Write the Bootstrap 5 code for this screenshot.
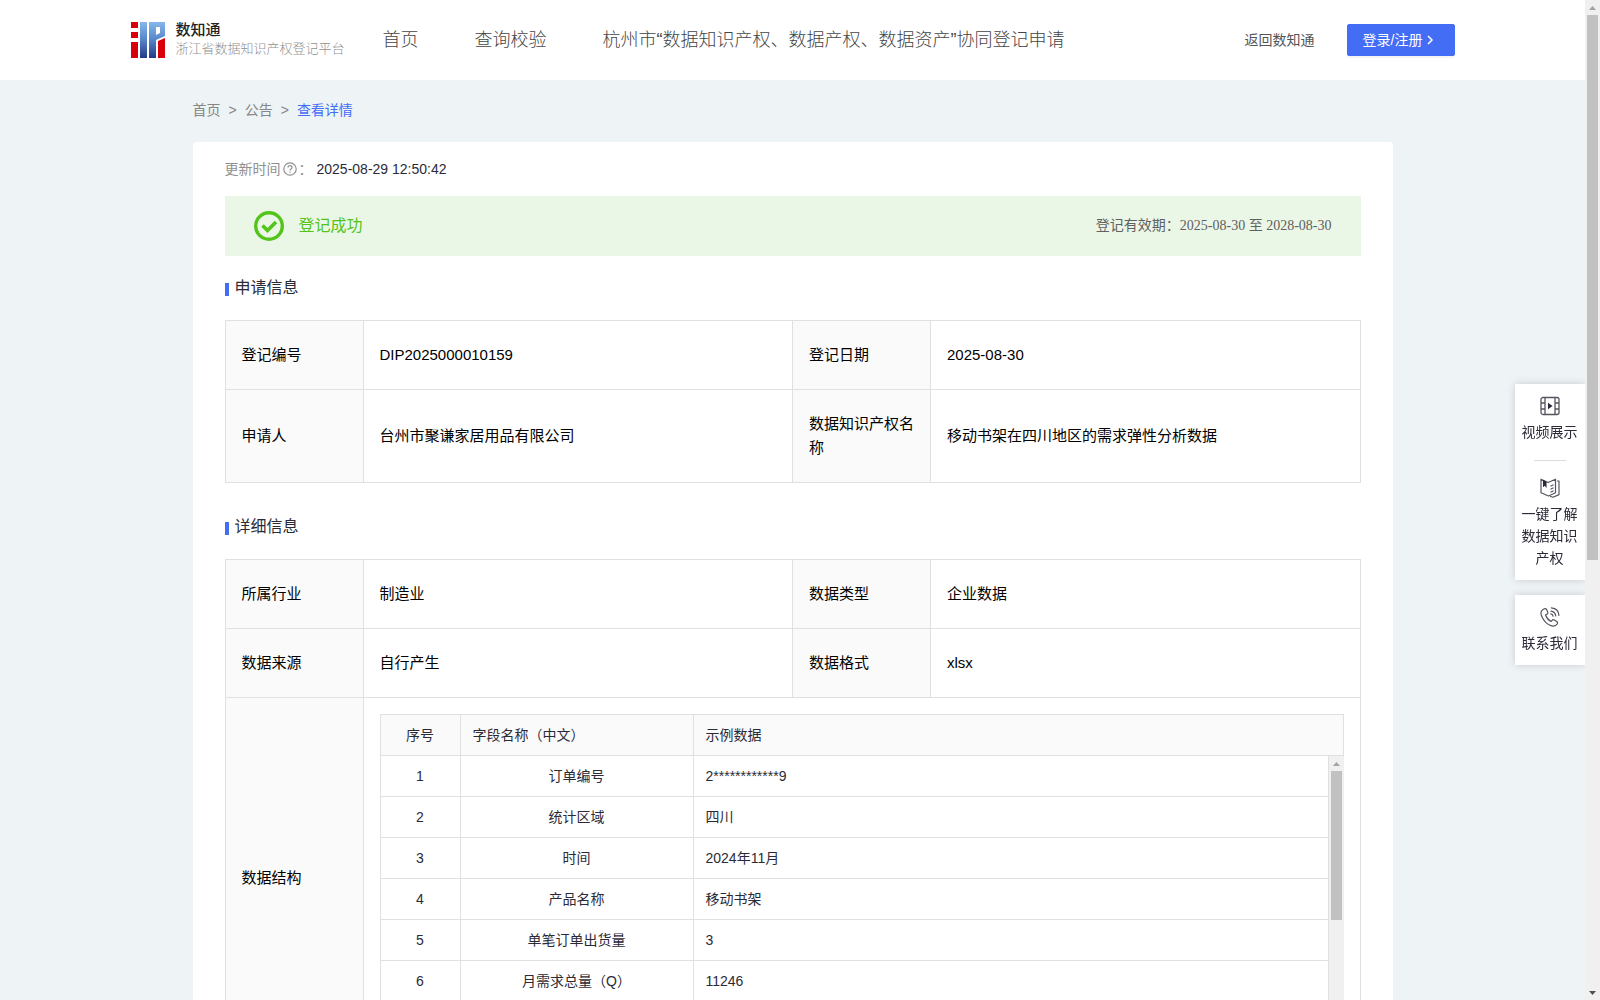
<!DOCTYPE html>
<html lang="zh-CN">
<head>
<meta charset="utf-8">
<meta name="viewport" content="width=device-width, initial-scale=1">
<title>数知通 - 查看详情</title>
<link href="https://cdn.jsdelivr.net/npm/bootstrap@5.3.0/dist/css/bootstrap.min.css" rel="stylesheet">
<style>
  :root { --brand: #446df6; --line: #e0e0e0; --ink: #2b2b38; --soft: #fafafa; }
  html { scrollbar-width: none; }
  html::-webkit-scrollbar { display: none; }
  body {
    font-family: "Liberation Sans", "Noto Sans CJK SC", sans-serif;
    font-size: 14px; line-height: 22px; color: var(--ink);
    background: #eef3f6; padding-right: 15px;
  }
  a { text-decoration: none; }
  .site-header { background: #fff; min-height: 80px; }
  .header-inner { max-width: 1324px; }
  .brand-name { font-size: 15px; line-height: 18px; font-weight: 500; color: #222; }
  .brand-sub { font-size: 13px; line-height: 20px; color: #909090; font-weight: 300; }
  .brand-link { width: 252px; gap: 11px; }
  .main-nav { gap: 56px; font-size: 18px; }
  .main-nav a { color: #444; font-weight: 300; }
  .back-link { color: #555; }
  .login-btn {
    --bs-btn-color: #fff; --bs-btn-bg: var(--brand); --bs-btn-border-color: var(--brand);
    --bs-btn-hover-color: #fff; --bs-btn-hover-bg: #6a8bff;
    width: 108px; height: 32px; font-size: 14px; border-radius: 2px; padding: 0 15px;
    box-shadow: 0 2px 0 rgba(0,0,0,.045);
  }
  .page-main { max-width: 1200px; }
  .crumbs { gap: 8px; padding: 19px 0 21px; color: #868686; }
  .crumbs a { color: #868686; }
  .crumbs .current { color: var(--brand); }
  .detail-panel { background: #fff; border-radius: 4px; padding: 16px 32px 32px; }
  .update-label { color: #909090; gap: 2px; }
  .status-bar { background: #ebf7e6; height: 60px; margin-top: 16px; padding: 0 29px; }
  .status-text { color: #52c41a; font-size: 16px; gap: 15px; }
  .valid-text { font-family: "Liberation Serif", "Noto Sans CJK SC", serif; color: #606060; }
  .section-title { font-size: 16px; line-height: 24px; font-weight: 400; margin: 20px 0; gap: 6px; color: var(--ink); }
  .section-title::before { content: ""; width: 4px; height: 13px; margin-top: 2px; background: var(--brand); }
  .section-title.later { margin-top: 32px; }
  .info-grid { table-layout: fixed; width: 100%; border-collapse: collapse; font-size: 15px; line-height: 24px; color: #000; }
  .info-grid .label-col { width: 138px; }
  .info-grid > tbody > tr > * { border: 1px solid var(--line); padding: 22px 16px; font-weight: 400; vertical-align: middle; }
  .info-grid > tbody > tr > th { background: var(--soft); }
  .info-grid > tbody > tr > td.nested { padding: 16px; }
  .field-grid { table-layout: fixed; width: 100%; border-collapse: separate; border-spacing: 0; font-size: 14px; line-height: 22px; color: var(--ink); }
  .field-grid .no-col { width: 81px; }
  .field-grid .name-col { width: 233px; }
  .field-grid th, .field-grid td { height: 41px; padding: 9px 12px; font-weight: 400; border-right: 1px solid var(--line); border-bottom: 1px solid var(--line); }
  .field-grid th { background: var(--soft); border-top: 1px solid var(--line); height: 42px; }
  .field-grid tr > :first-child { border-left: 1px solid var(--line); }
  .field-scroll { height: 286px; overflow: hidden; }
  .bar-track { width: 15px; background: #f0f0f0; padding: 0 2px; }
  .bar-track .arrow { height: 15px; display: flex; align-items: center; justify-content: center; }
  .bar-track .thumb { background: #c1c1c1; width: 11px; height: 149px; }
  .page-bar { position: fixed; top: 0; right: 0; bottom: 0; z-index: 30; }
  .page-bar .thumb { height: 56.2%; }
  .side-tools { position: fixed; right: 15px; top: 384px; width: 70px; z-index: 20; gap: 15px; }
  .side-box { background: #fff; padding: 12px 7px 11px 6px; box-shadow: 0 0 8px rgba(0,0,0,.16); clip-path: inset(-12px 0 -12px -12px); }
  .side-box a { color: var(--ink); gap: 5px; }
  .side-rule { width: 32px; height: 1px; background: #dcdcdc; margin: 17px auto; }
</style>
<script src="https://cdn.jsdelivr.net/npm/bootstrap@5.3.0/dist/js/bootstrap.bundle.min.js" defer></script>
</head>
<body>

<header class="site-header d-flex align-items-center">
  <div class="header-inner d-flex align-items-center w-100 mx-auto">
    <a href="#" class="brand-link d-flex align-items-center flex-shrink-0">
      <svg width="34" height="36" viewBox="0 0 34 36" aria-hidden="true" class="flex-shrink-0">
        <defs><linearGradient id="blue" x1="0" y1="0" x2="0" y2="36" gradientUnits="userSpaceOnUse"><stop offset="0" stop-color="#86b8ec"/><stop offset=".5" stop-color="#5584c8"/><stop offset="1" stop-color="#253a86"/></linearGradient></defs>
        <path fill="#d7000b" d="M0 0h7v6H0zM0 10h7v6H0zM0 20h7v16H0zM27 19l7-3v20h-7z"/>
        <path fill="url(#blue)" d="M9 0h7v36H9zM18 0h16v14l-9 4v18h-7zM25 5v8l4-2V5z" fill-rule="evenodd"/>
      </svg>
      <span class="d-flex flex-column">
        <span class="brand-name">数知通</span>
        <span class="brand-sub text-nowrap">浙江省数据知识产权登记平台</span>
      </span>
    </a>
    <nav class="main-nav d-flex text-nowrap flex-grow-1">
      <a href="#">首页</a>
      <a href="#">查询校验</a>
      <a href="#">杭州市“数据知识产权、数据产权、数据资产”协同登记申请</a>
    </nav>
    <a href="#" class="back-link text-nowrap me-3">返回数知通</a>
    <button type="button" class="login-btn btn d-inline-flex align-items-center text-nowrap ms-3 flex-shrink-0">登录/注册
      <svg width="8" height="10" viewBox="0 0 8 10" class="ms-1" fill="none" stroke="#fff" stroke-width="1.5" aria-hidden="true"><path d="M2 1l4 4-4 4"/></svg>
    </button>
  </div>
</header>

<main class="page-main mx-auto">
  <nav class="crumbs d-flex" aria-label="breadcrumb">
    <a href="#">首页</a><span>&gt;</span><a href="#">公告</a><span>&gt;</span><span class="current">查看详情</span>
  </nav>

  <section class="detail-panel">
    <div class="d-flex align-items-center gap-1">
      <span class="update-label d-flex align-items-center">更新时间
        <svg width="14" height="14" viewBox="0 0 14 14" fill="none" stroke="#909090" stroke-width="1.2" aria-hidden="true"><circle cx="7" cy="7" r="6.2"/><path d="M5 5.5C5 3 9 3 9 5.4 9 7 7 6.800 7 8.400M7 9.600v1.200"/></svg><span>：</span></span>
      <span>2025-08-29 12:50:42</span>
    </div>

    <div class="status-bar d-flex align-items-center justify-content-between">
      <span class="status-text d-flex align-items-center">
        <svg width="30" height="30" viewBox="0 0 30 30" fill="none" stroke="#52c41a" aria-hidden="true"><circle cx="15" cy="15" r="13.300" stroke-width="3.400"/><path d="M8.500 14.500l5 5 8.500-8.500" stroke-width="3.600"/></svg>登记成功</span>
      <span class="valid-text">登记有效期：2025-08-30 至 2028-08-30</span>
    </div>

    <h2 class="section-title d-flex align-items-center">申请信息</h2>
    <table class="info-grid">
      <colgroup><col class="label-col"><col><col class="label-col"><col></colgroup>
      <tbody>
        <tr><th scope="row">登记编号</th><td>DIP2025000010159</td><th scope="row">登记日期</th><td>2025-08-30</td></tr>
        <tr><th scope="row">申请人</th><td>台州市聚谦家居用品有限公司</td><th scope="row">数据知识产权名称</th><td>移动书架在四川地区的需求弹性分析数据</td></tr>
      </tbody>
    </table>

    <h2 class="section-title later d-flex align-items-center">详细信息</h2>
    <table class="info-grid">
      <colgroup><col class="label-col"><col><col class="label-col"><col></colgroup>
      <tbody>
        <tr><th scope="row">所属行业</th><td>制造业</td><th scope="row">数据类型</th><td>企业数据</td></tr>
        <tr><th scope="row">数据来源</th><td>自行产生</td><th scope="row">数据格式</th><td>xlsx</td></tr>
        <tr>
          <th scope="row">数据结构</th>
          <td colspan="3" class="nested">
            <table class="field-grid">
              <colgroup><col class="no-col"><col class="name-col"><col></colgroup>
              <thead><tr><th scope="col" class="text-center">序号</th><th scope="col">字段名称（中文）</th><th scope="col">示例数据</th></tr></thead>
            </table>
            <div class="field-scroll d-flex">
              <div class="flex-grow-1">
                <table class="field-grid">
                  <colgroup><col class="no-col"><col class="name-col"><col></colgroup>
                  <tbody>
                    <tr><td class="text-center">1</td><td class="text-center">订单编号</td><td>2************9</td></tr>
                    <tr><td class="text-center">2</td><td class="text-center">统计区域</td><td>四川</td></tr>
                    <tr><td class="text-center">3</td><td class="text-center">时间</td><td>2024年11月</td></tr>
                    <tr><td class="text-center">4</td><td class="text-center">产品名称</td><td>移动书架</td></tr>
                    <tr><td class="text-center">5</td><td class="text-center">单笔订单出货量</td><td>3</td></tr>
                    <tr><td class="text-center">6</td><td class="text-center">月需求总量（Q）</td><td>11246</td></tr>
                  </tbody>
                </table>
              </div>
              <div class="bar-track" aria-hidden="true">
                <div class="arrow"><svg width="7" height="4" viewBox="0 0 7 4"><path fill="#a3a3a3" d="M0 4L3.500 0 7 4z"/></svg></div>
                <div class="thumb"></div>
              </div>
            </div>
          </td>
        </tr>
      </tbody>
    </table>
  </section>
</main>

<aside class="side-tools d-flex flex-column text-center">
  <div class="side-box">
    <a href="#" class="d-flex flex-column align-items-center">
      <svg width="20" height="20" viewBox="0 0 20 20" fill="none" stroke="#55555f" stroke-width="1.300" aria-hidden="true"><rect x="1" y="1.500" width="18" height="17" rx="2"/><path d="M5 1.500v17M15 1.500v17M1 7h4M1 13h4M15 7h4M15 13h4"/><path d="M8 6.800v6.400l4.600-3.200z" fill="#2b2b38" stroke="none"/></svg>
      视频展示
    </a>
    <div class="side-rule"></div>
    <a href="#" class="d-flex flex-column align-items-center">
      <svg width="20" height="20" viewBox="0 0 20 20" fill="none" stroke="#55555f" stroke-width="1.200" stroke-linejoin="round" aria-hidden="true"><path d="M1 1.200L8 4.500 15.500 1.200v13.600L8.500 18 1 14.800z"/><path d="M17 3h2v13.600L13 19.300l-3-1M10.500 8.200l3-1.400M10.500 11.200l3-1.400M10.500 14.200l3-1.400"/><path d="M3 1.800v7.400l1.700-1.400L6.500 10V3.500z" fill="#2b2b38" stroke="none"/></svg>
      一键了解数据知识产权
    </a>
  </div>
  <div class="side-box">
    <a href="#" class="d-flex flex-column align-items-center">
      <svg width="20" height="20" viewBox="0 0 20 20" fill="none" stroke="#55555f" stroke-width="1.200" stroke-linecap="round" stroke-linejoin="round" aria-hidden="true"><path d="M3.300 2.200C1 3.600.3 6.200 1.800 9.400c2 4.300 4.600 7.200 8.200 8.900 3.300 1.500 5.800.9 7.300-1.600.5-.9.3-1.500-.6-2.100l-2.400-1.600c-.9-.6-1.600-.5-2.200.3l-.9 1.200c-2.800-1.300-4.700-3.600-5.700-6.500l1.600-1c.7-.5.9-1.200.6-2L6.600 2.600c-.4-.9-1.400-1.200-3.300-.4z"/><path d="M11 4.200c2.600.3 4.300 2 4.700 4.600M11.400.9c4.400.4 7.200 3.200 7.500 7.500M10.800 6.900c1.300.2 2 .9 2.200 2.200"/></svg>
      联系我们
    </a>
  </div>
</aside>

<div class="bar-track page-bar d-flex flex-column" aria-hidden="true">
  <div class="arrow"><svg width="7" height="4" viewBox="0 0 7 4"><path fill="#a3a3a3" d="M0 4L3.500 0 7 4z"/></svg></div>
  <div class="flex-grow-1"><div class="thumb"></div></div>
  <div class="arrow"><svg width="7" height="4" viewBox="0 0 7 4"><path fill="#505050" d="M0 0h7L3.500 4z"/></svg></div>
</div>
</body>
</html>
